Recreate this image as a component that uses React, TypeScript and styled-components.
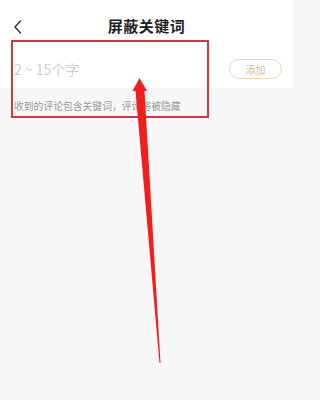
import React from 'react';
import styled, { createGlobalStyle } from 'styled-components';

const GlobalStyle = createGlobalStyle`
  html, body {
    margin: 0;
    padding: 0;
    background: #f7f7f7;
  }
  body {
    font-family: "Noto Sans CJK SC", "Noto Sans", sans-serif;
  }
`;

const Page = styled.div`
  position: relative;
  width: 293px;
  height: 400px;
  background: #f7f7f7;
  overflow: hidden;
`;

const Header = styled.div`
  height: 50px;
  padding-top: 0;
  display: flex;
  align-items: center;
  justify-content: center;
  position: relative;
  background: #fff;
`;

const Back = styled.div`
  position: absolute;
  left: 12px;
  top: 16px;
  width: 12px;
  height: 16px;
`;

const Title = styled.h1`
  margin: 0;
  font-size: 15px;
  font-weight: 700;
  color: #222;
  letter-spacing: 0.5px;
`;

const InputRow = styled.div`
  height: 38px;
  display: flex;
  align-items: center;
  justify-content: space-between;
  padding: 0 11px 0 14px;
  background: #fff;
`;

const Placeholder = styled.span`
  font-size: 14px;
  color: #cfcfcf;
`;

const AddButton = styled.span`
  width: 51px;
  height: 18px;
  border: 1px solid #ecd3bd;
  border-radius: 10px;
  display: flex;
  align-items: center;
  justify-content: center;
  font-size: 10px;
  color: #dcb99a;
`;

const Hint = styled.p`
  margin: 0;
  padding: 11px 14px 0;
  font-size: 9.8px;
  color: #9a9a9a;
`;

const Highlight = styled.div`
  position: absolute;
  left: 11px;
  top: 40px;
  width: 194px;
  height: 74px;
  border: 2px solid #d2363f;
`;

const Arrow = styled.svg`
  position: absolute;
  left: 0;
  top: 0;
`;

export default function App() {
  return (
    <Page>
      <GlobalStyle />
      <Header>
        <Back>
          <svg width="12" height="16" viewBox="0 0 12 16">
            <path d="M8.5 2 L3 8 L8.5 14" fill="none" stroke="#333" strokeWidth="1.4" strokeLinecap="round" strokeLinejoin="round" />
          </svg>
        </Back>
        <Title>屏蔽关键词</Title>
      </Header>
      <InputRow>
        <Placeholder>2 ~ 15个字</Placeholder>
        <AddButton>添加</AddButton>
      </InputRow>
      <Hint>收到的评论包含关键词，评论将被隐藏</Hint>
      <Highlight />
      <Arrow width="293" height="400" viewBox="0 0 293 400">
        <path d="M139.5 78 L147 91 L144.5 91 L160.5 363 L159.5 363 L135.5 91 L132.5 91 Z" fill="#f21d1d" />
      </Arrow>
    </Page>
  );
}
